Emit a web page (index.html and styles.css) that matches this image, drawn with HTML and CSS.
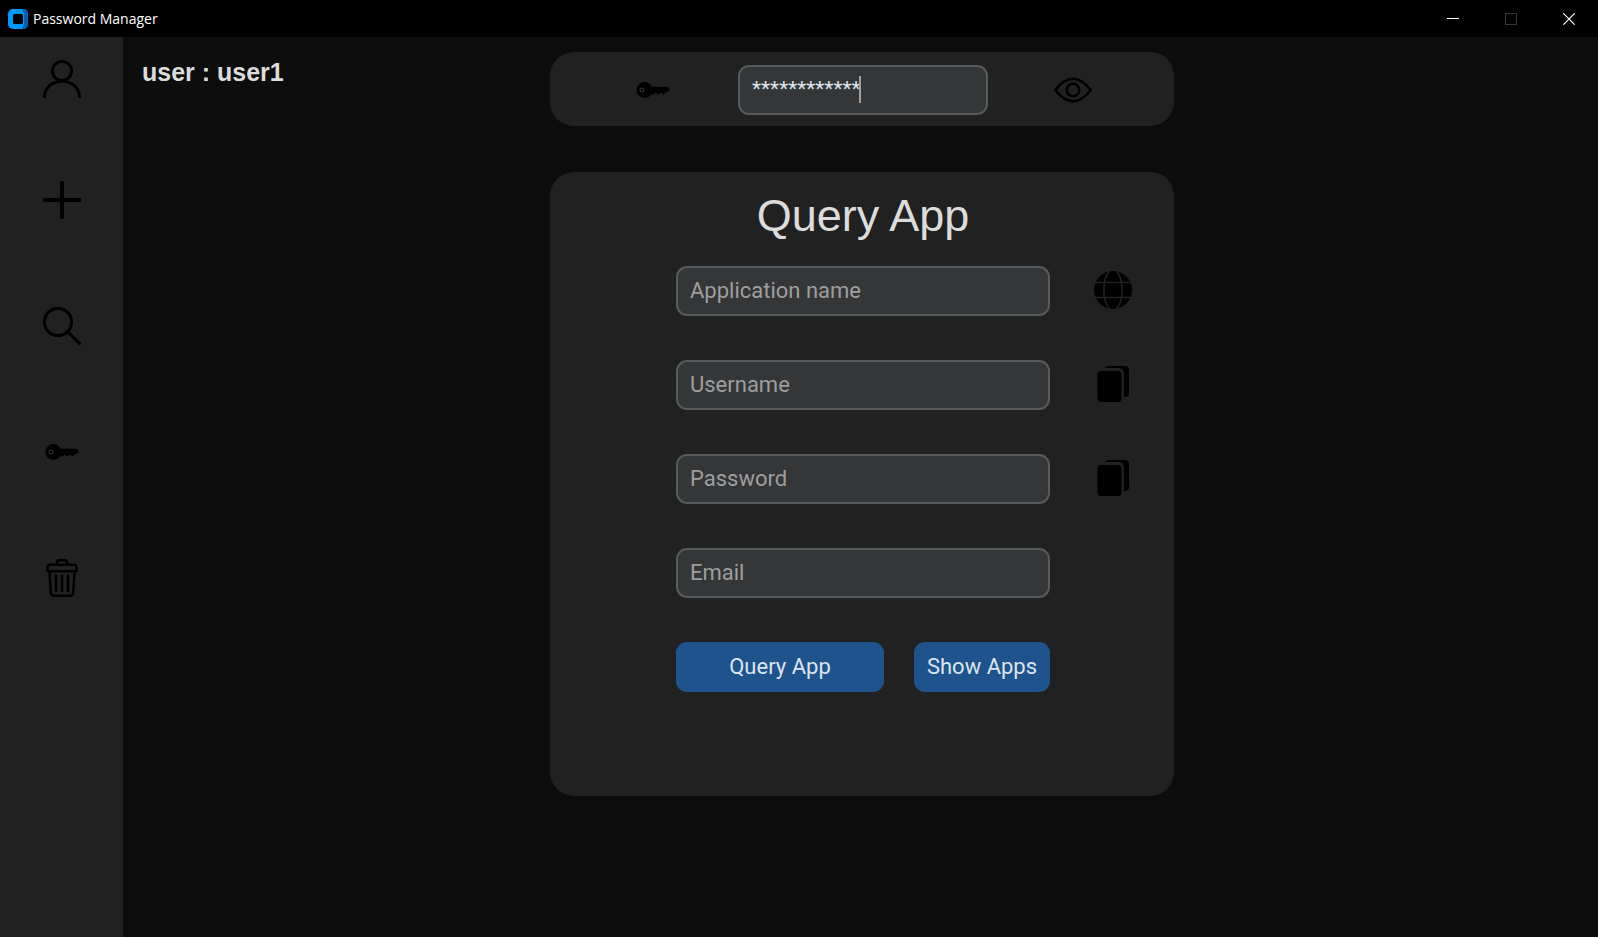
FILE: index.html
```html
<!DOCTYPE html>
<html lang="en">
<head>
<meta charset="utf-8">
<title>Password Manager</title>
<link rel="stylesheet" href="styles.css">
</head>
<body>
<svg class="symbols" aria-hidden="true">
  <symbol id="key" viewBox="0 0 34 18">
    <path fill="#000" d="M8.500 1a8 8 0 0 1 7.100 4.800H31q2.800 1 2.800 3.200L31 11.300H29.800L27.700 13.500 24.800 11.500 22 13.500 19.500 11.500 17.500 13.500 15.300 13.200A8 8 0 1 1 8.500 1Z"/>
    <circle cx="6" cy="9" r="2" fill="none" stroke="#3a3a3a" stroke-width="1"/>
  </symbol>
  <symbol id="copy" viewBox="0 0 32 36">
    <path d="M8 2q1-2 4-2h16q4 0 4 4v23q0 4-4 4h-1V8q0-6-6-6Z"/>
    <rect x="0.500" y="5" width="24" height="31" rx="3.500"/>
  </symbol>
</svg>
<header class="titlebar">
  <svg class="logo" viewBox="0 0 20 20" aria-hidden="true">
    <rect width="20" height="20" rx="5" fill="#0099ff"/>
    <path d="M14 0h1q5 0 5 5v10q0 5-5 5h-1l2-5V5Z" fill="#0060b4"/>
    <rect x="5" y="5" width="10" height="10" rx="1.500" fill="#000"/>
  </svg>
  <span class="app-name">Password Manager</span>
  <div class="window-controls">
    <button type="button" aria-label="Minimize"><svg viewBox="0 0 12 12"><path d="M0 5.500h12" stroke="#fff"/></svg></button>
    <button type="button" aria-label="Maximize" disabled><svg viewBox="0 0 12 12"><rect x=".5" y=".5" width="11" height="11" fill="none" stroke="#373737"/></svg></button>
    <button type="button" aria-label="Close"><svg viewBox="0 0 12 12"><path d="m.3.300 11.400 11.400m0-11.400L.3 11.700" stroke="#fff" stroke-width="1.200"/></svg></button>
  </div>
</header>
<div class="app">
  <nav class="sidebar" aria-label="Sections">
    <button class="nav-button user" type="button" aria-label="User"><svg class="line" viewBox="0 0 38 38"><circle cx="19" cy="11" r="9.600"/><path d="M1.400 38C1.400 15.500 36.600 15.500 36.600 38"/></svg></button>
    <button class="nav-button" type="button" aria-label="Add"><svg class="line round" viewBox="0 0 38 38"><path class="thick" d="M19 1.700v34.600M1.700 19h34.600"/></svg></button>
    <button class="nav-button" type="button" aria-label="Search"><svg class="line round" viewBox="0 0 38 38"><circle cx="15" cy="15" r="13.600"/><path d="m25 25 11.500 11.500"/></svg></button>
    <button class="nav-button" type="button" aria-label="Keys"><svg class="key-icon"><use href="#key"/></svg></button>
    <button class="nav-button" type="button" aria-label="Delete"><svg class="line round trash" viewBox="0 0 38 38"><path d="M14 5.500V3.500q0-2.300 2.300-2.300h5.400q2.300 0 2.300 2.300v2M7 5.800h24q2.500 0 2.500 2.500v4h-29v-4q0-2.500 2.500-2.500ZM6.500 12.500l1.300 21q.2 3.300 3 3.300h16.400q2.800 0 3-3.300l1.300-21M13 16.500V32M19 16.500V32M25 16.500V32"/></svg></button>
  </nav>
  <main class="content">
    <p class="current-user">user : user1</p>
    <div class="stack">
      <section class="panel master" aria-label="Master password">
        <svg class="key-icon" aria-hidden="true"><use href="#key"/></svg>
        <div class="master-field">
          <input class="field" type="text" aria-label="Master password" value="************" autocomplete="off">
          <span class="caret"></span>
        </div>
        <button class="icon-button" type="button" aria-label="Show password"><svg class="line eye" viewBox="0 0 38 38"><path d="M1.200 19Q19-3.500 36.800 19 19 41.500 1.200 19Z"/><circle cx="19" cy="19" r="6.300"/></svg></button>
      </section>
      <form class="panel query">
        <h1>Query App</h1>
        <div class="row">
          <input class="field" type="text" placeholder="Application name" aria-label="Application name">
          <button class="icon-button" type="button" aria-label="Open website"><svg viewBox="0 0 38 38"><circle cx="19" cy="19" r="19"/><path d="M0 11.500h38M0 26.500h38M15.500 0C8 9 8 29 15.500 38M22.500 0c7.500 9 7.500 29 0 38" fill="none" stroke="#212121" stroke-width="1.600"/></svg></button>
        </div>
        <div class="row">
          <input class="field" type="text" placeholder="Username" aria-label="Username">
          <button class="icon-button" type="button" aria-label="Copy username"><svg class="copy-icon"><use href="#copy"/></svg></button>
        </div>
        <div class="row">
          <input class="field" type="text" placeholder="Password" aria-label="Password">
          <button class="icon-button" type="button" aria-label="Copy password"><svg class="copy-icon"><use href="#copy"/></svg></button>
        </div>
        <div class="row">
          <input class="field" type="text" placeholder="Email" aria-label="Email">
        </div>
        <div class="row actions">
          <button class="action wide" type="button">Query App</button>
          <button class="action" type="button">Show Apps</button>
        </div>
      </form>
    </div>
  </main>
</div>
</body>
</html>
```
FILE: styles.css
```css
* { box-sizing: border-box; }

body {
  margin: 0;
  min-height: 100vh;
  display: flex;
  flex-direction: column;
  background: #0d0d0d;
  color: #dce4ee;
  font-family: Roboto, sans-serif;
}

button {
  border: 0;
  padding: 0;
  background: none;
  color: inherit;
  font: inherit;
}

svg { display: block; }

.symbols { position: absolute; width: 0; height: 0; }

.titlebar {
  display: flex;
  align-items: center;
  height: 37px;
  padding-left: 8px;
  background: #000;
}

.logo { width: 20px; height: 20px; }

.app-name {
  margin-left: 5px;
  color: #fff;
  font: 14px/20px "Open Sans", sans-serif;
}

.window-controls { display: flex; margin-left: auto; height: 100%; }

.window-controls button {
  display: grid;
  place-items: center;
  width: 58px;
}

.window-controls svg { width: 12px; height: 12px; }

.app { display: flex; flex: 1; }

.sidebar {
  display: flex;
  flex-direction: column;
  align-items: center;
  gap: 88px;
  width: 123px;
  padding-top: 23px;
  background: #212121;
}

.nav-button, .icon-button {
  display: grid;
  place-items: center;
  width: 38px;
  height: 38px;
}

.nav-button.user { height: 33px; align-items: start; }

.nav-button > svg, .icon-button > svg { width: 38px; height: 38px; }

.line { fill: none; stroke: #000; stroke-width: 3px; }
.thick { stroke-width: 4px; }
.round { stroke-linecap: round; stroke-linejoin: round; }
.trash, .eye { stroke-width: 2.5px; }

.nav-button > svg.key-icon, .key-icon { width: 34px; height: 18px; }
.icon-button > svg.copy-icon { width: 32px; height: 36px; }

.content {
  flex: 1;
  display: grid;
  grid-template-columns: 1fr minmax(auto, 624px) 1fr;
  align-items: start;
  padding: 15px 0 0 3px;
}

.current-user {
  margin: 5px 0 0 16px;
  color: #dcdcdc;
  font: bold 25px/30px "Liberation Sans", Arial, sans-serif;
}

.stack { display: grid; gap: 46px; }

.panel { border-radius: 24px; background: #212121; }

.master {
  display: flex;
  justify-content: space-between;
  align-items: center;
  padding: 13px 82px 11px 86px;
}

.master-field { position: relative; width: 250px; margin-left: 2px; }

.master-field .field { font-size: 21px; }

.caret {
  position: absolute;
  left: 121px;
  top: 11px;
  width: 2px;
  height: 27px;
  background: #a0a0a0;
}

.field {
  display: block;
  width: 100%;
  height: 50px;
  padding: 0 12px 2px;
  border: 2px solid #565b5e;
  border-radius: 11px;
  background: #343638;
  color: #dce4ee;
  font: 22px Roboto, sans-serif;
}

.field::placeholder { color: #9e9e9e; opacity: 1; }

.query {
  display: grid;
  gap: 44px;
  align-content: start;
  aspect-ratio: 1;
  padding: 19px 42px 0 126px;
}

h1 {
  margin: 0 82px 0 0;
  color: #dcdcdc;
  text-align: center;
  font: 45px/50px "Liberation Sans", Arial, sans-serif;
}

h1 + .row { margin-top: -19px; }

.row {
  display: grid;
  grid-template-columns: 1fr 38px;
  gap: 44px;
  align-items: center;
}

.row .icon-button { margin-bottom: 2px; }

.actions { grid-template-columns: 208px 1fr; gap: 30px; margin-right: 82px; }

.action {
  height: 50px;
  padding-bottom: 2px;
  border-radius: 11px;
  background: #1f538d;
  font-size: 22px;
}
```
